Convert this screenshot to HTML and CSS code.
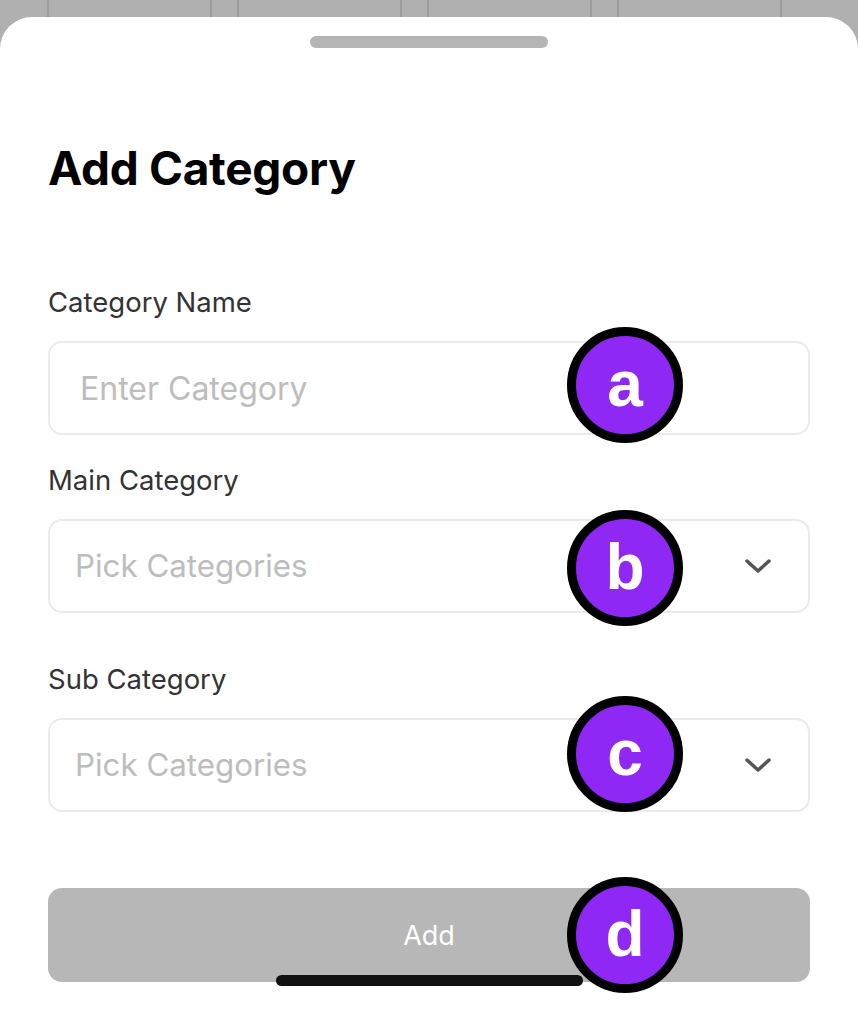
FILE: index.html
```html
<!DOCTYPE html>
<html lang="en">
<head>
  <meta charset="UTF-8">
  <title>Add Category</title>
  <link rel="stylesheet" href="styles.css">
</head>
<body>
  <div class="backdrop">
    <div class="cell"></div>
    <div class="cell wide"><span class="peek">g</span></div>
    <div class="cell narrow"></div>
    <div class="cell wide"></div>
    <div class="cell narrow"></div>
    <div class="cell wide"></div>
    <div class="cell narrow"></div>
    <div class="cell wide"></div>
    <div class="cell"></div>
  </div>

  <div class="sheet">
    <div class="handle"></div>
    <h1>Add Category</h1>

    <div class="field">
      <label for="name">Category Name</label>
      <div class="input-wrap">
        <input id="name" type="text" placeholder="Enter Category">
        <span class="badge badge-a">a</span>
      </div>
    </div>

    <div class="field">
      <label>Main Category</label>
      <div class="input-wrap">
        <div class="select">
          <span class="placeholder">Pick Categories</span>
          <svg class="chevron" width="28" height="16" viewBox="0 0 28 16">
            <path d="M3 3 L14 13 L25 3" fill="none" stroke="#555" stroke-width="3.5" stroke-linecap="round" stroke-linejoin="round"/>
          </svg>
        </div>
        <span class="badge badge-b">b</span>
      </div>
    </div>

    <div class="field field-sub">
      <label>Sub Category</label>
      <div class="input-wrap">
        <div class="select">
          <span class="placeholder">Pick Categories</span>
          <svg class="chevron" width="28" height="16" viewBox="0 0 28 16">
            <path d="M3 3 L14 13 L25 3" fill="none" stroke="#555" stroke-width="3.5" stroke-linecap="round" stroke-linejoin="round"/>
          </svg>
        </div>
        <span class="badge badge-c">c</span>
      </div>
    </div>

    <div class="input-wrap actions">
      <button class="add-btn">Add</button>
      <span class="badge badge-d">d</span>
      <div class="home-bar"></div>
    </div>
  </div>
</body>
</html>
```

FILE: styles.css
```css
* {
  box-sizing: border-box;
}
body {
  margin: 0;
  background: #b0b0b0;
  font-family: Inter, "Noto Sans", sans-serif;
  overflow: hidden;
}

/* table peeking out behind the sheet */
.backdrop {
  display: flex;
  height: 17px;
  overflow: hidden;
}
.cell {
  width: 49px;
  border-right: 2px solid #9c9c9c;
  position: relative;
}
.cell.wide {
  width: 163px;
}
.cell.narrow {
  width: 27px;
}
.cell:last-child {
  flex: 1;
  border-right: none;
}
.peek {
  position: absolute;
  left: 118px;
  top: -26px;
  font-size: 22px;
  color: #111;
}

.sheet {
  background: #fff;
  border-radius: 32px 32px 0 0;
  height: 995px;
  padding: 19px 48px 0;
}
.handle {
  width: 238px;
  height: 12px;
  border-radius: 6px;
  background: #b5b5b5;
  margin: 0 auto;
}
h1 {
  margin: 90px 0 0;
  font-size: 46px;
  font-weight: 700;
  line-height: 60px;
  color: #000;
  letter-spacing: -0.3px;
}

.field {
  margin-top: 88px;
}
.field + .field {
  margin-top: 29px;
}
.field.field-sub {
  margin-top: 50px;
}
label {
  display: block;
  font-size: 27.5px;
  line-height: 32px;
  color: #333;
  margin-bottom: 23px;
}

.input-wrap {
  position: relative;
}
input,
.select {
  display: flex;
  align-items: center;
  width: 100%;
  height: 94px;
  border: 2px solid #ebebeb;
  border-radius: 14px;
  background: #fff;
  font-family: inherit;
  font-size: 32px;
  color: #333;
}
input {
  padding: 0 30px;
  outline: none;
}
input::placeholder,
.placeholder {
  color: #bdbdbd;
}
.select {
  justify-content: space-between;
  padding: 0 36px 0 25px;
  font-size: 31.3px;
}

.actions {
  margin-top: 76px;
}
.add-btn {
  width: 100%;
  height: 94px;
  border: none;
  border-radius: 14px;
  background: #b7b7b7;
  color: #fff;
  font-family: inherit;
  font-size: 27px;
}
.home-bar {
  position: absolute;
  left: 228px;
  top: 87px;
  width: 307px;
  height: 11px;
  border-radius: 6px;
  background: #111;
}

/* lettered callouts */
.badge {
  position: absolute;
  left: 519px;
  width: 116px;
  height: 116px;
  border-radius: 50%;
  border: 9px solid #000;
  background: #8f27f5;
  color: #fff;
  font-family: "Liberation Sans", Arial, sans-serif;
  font-weight: 700;
  font-size: 64px;
  line-height: 96px;
  text-align: center;
  z-index: 2;
}
.badge-a {
  top: -14px;
}
.badge-b {
  top: -9px;
}
.badge-c {
  top: -22px;
}
.badge-d {
  top: -11px;
}
```
